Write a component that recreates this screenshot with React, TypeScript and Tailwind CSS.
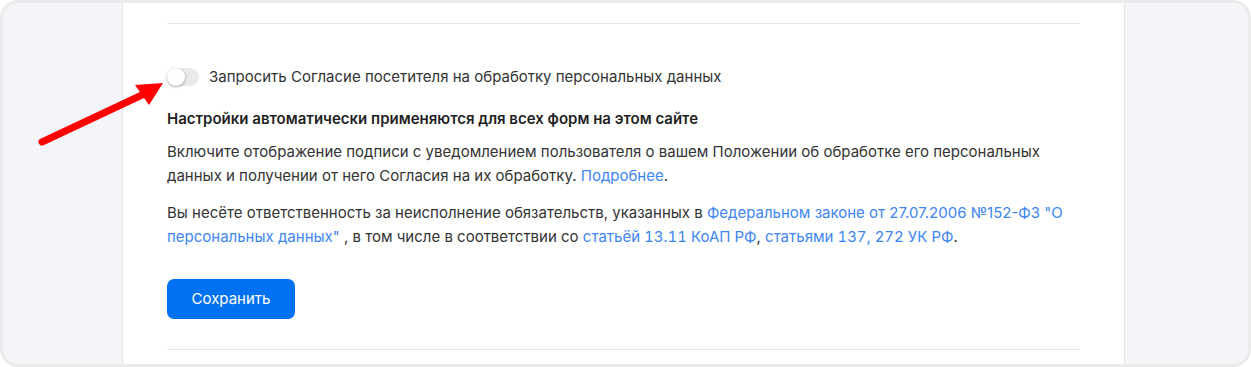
const font = { fontFamily: 'Inter, "Noto Sans", sans-serif' };

const ConsentToggle = () => (
  <div className="flex items-center gap-[10px]">
    <div className="relative h-[18px] w-[32px] rounded-full bg-[#e9e9ec]">
      <span className="absolute left-0 top-0 h-[18px] w-[18px] rounded-full bg-white shadow-[0_1px_3px_rgba(0,0,0,0.35)]" />
    </div>
    <span className="text-[15px] leading-[20px] text-[#333333]">
      Запросить Согласие посетителя на обработку персональных данных
    </span>
  </div>
);

const Arrow = () => (
  <svg className="pointer-events-none absolute left-0 top-0" width="200" height="160" viewBox="0 0 200 160">
    <line x1="42" y1="142" x2="142" y2="95" stroke="#ff0000" strokeWidth="7" strokeLinecap="round" />
    <polygon points="163,83 135,85 149,105" fill="#ff0000" />
  </svg>
);

export default function App() {
  return (
    <div className="relative h-[367px] w-full overflow-hidden" style={font}>
      <div className="flex h-full rounded-[18px] border-[3px] border-[#ebebeb] bg-[#f4f5f9] pl-[119px]">
        <div className="h-full w-[1003px] border-x border-[#e4e6ea] bg-white px-[44px] pt-[20px]">
          <div className="h-px bg-[#e6e6e6]" />

          <div className="mt-[43px]">
            <ConsentToggle />
          </div>

          <h3 className="mt-[20px] text-[15px] font-semibold leading-[24px] text-[#1f1f1f]">
            Настройки автоматически применяются для всех форм на этом сайте
          </h3>

          <p className="mt-[9px] text-[15px] leading-[24px] text-[#333333]">
            Включите отображение подписи с уведомлением пользователя о вашем Положении об обработке его персональных
            данных и получении от него Согласия на их обработку. <a className="text-[#3d86f5]">Подробнее</a>.
          </p>

          <p className="mt-[13px] text-[15px] leading-[24px] text-[#333333]">
            Вы несёте ответственность за неисполнение обязательств, указанных в{' '}
            <a className="text-[#3d86f5]">Федеральном законе от 27.07.2006 №152-ФЗ "О персональных данных"</a> , в том
            числе в соответствии со <a className="text-[#3d86f5] tabular-nums">статьёй 13.11 КоАП РФ</a>,{' '}
            <a className="text-[#3d86f5] tabular-nums">статьями 137, 272 УК РФ</a>.
          </p>

          <button className="mt-[30px] h-[40px] w-[128px] rounded-[7px] bg-[#0071f0] text-[15px] text-white">
            Сохранить
          </button>

          <div className="mt-[30px] h-px bg-[#e6e6e6]" />
        </div>
      </div>
      <Arrow />
    </div>
  );
}
